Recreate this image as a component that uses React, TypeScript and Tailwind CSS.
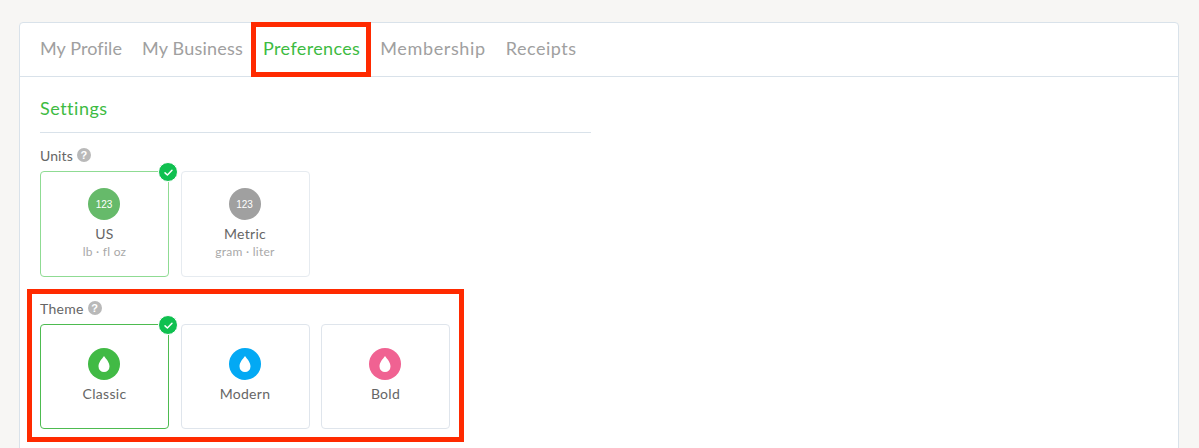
import type { ReactNode } from "react";

const tabs = [
  { label: "My Profile", spacing: "tracking-[0.08px]" },
  { label: "My Business", spacing: "tracking-[0.22px]" },
  { label: "Preferences", spacing: "tracking-[0.36px]" },
  { label: "Membership", spacing: "tracking-[0.64px]" },
  { label: "Receipts", spacing: "tracking-[0.5px]" },
];

function HelpDot() {
  return (
    <span className="flex h-[14px] w-[14px] items-center justify-center rounded-full bg-[#b9b9b9] font-['Liberation_Sans',sans-serif] text-[11px] font-bold leading-none text-white">
      ?
    </span>
  );
}

function CheckBadge() {
  return (
    <span className="absolute -right-[10px] -top-[10px] flex h-[20px] w-[20px] items-center justify-center rounded-full border border-white bg-[#10c050]">
      <svg viewBox="0 0 12 12" className="h-[11px] w-[11px]" fill="none" stroke="white" strokeWidth="1.6" strokeLinecap="round" strokeLinejoin="round">
        <path d="M2.2 6.4 4.8 8.8 9.8 3.6" />
      </svg>
    </span>
  );
}

function Drop() {
  return (
    <svg viewBox="0 0 32 32" className="h-8 w-8" fill="white">
      <path d="M16 8c2.3 3.2 5.5 6.2 5.5 10.5a5.5 5.5 0 0 1-11 0c0-4.3 3.2-7.3 5.5-10.5z" />
    </svg>
  );
}

function Digits() {
  return <span className="font-['Liberation_Sans',sans-serif] text-[10px] text-white">123</span>;
}

function Tile({
  circle,
  title,
  sub,
  selected,
  className,
  children,
}: {
  circle: string;
  title: string;
  sub?: string;
  selected?: boolean;
  className: string;
  children: ReactNode;
}) {
  return (
    <div className={`relative flex w-[129px] flex-col items-center rounded-[4px] border ${className}`}>
      {selected && <CheckBadge />}
      <div className={`mr-px flex h-8 w-8 items-center justify-center rounded-full ${circle}`}>{children}</div>
      <div className="mt-[4px] text-[14px] leading-[20px] tracking-[0.3px] text-[#666666]">{title}</div>
      {sub && <div className="text-[12px] leading-[16px] tracking-[0.25px] text-[#a9a9a9]">{sub}</div>}
    </div>
  );
}

function Label({ text, className }: { text: string; className: string }) {
  return (
    <div className={`flex h-[20px] items-center gap-[4px] pb-[2px] text-[14px] text-[#666666] ${className}`}>
      {text}
      <HelpDot />
    </div>
  );
}

export default function App() {
  return (
    <div className="relative h-[448px] overflow-hidden bg-[#f7f6f4] pl-[19px] pr-[20px] pt-[22px] font-['Lato','Noto_Sans',sans-serif]">
      <div className="h-[500px] rounded-[4px] border border-[#d9e2ea] bg-white">
        <div className="flex h-[54px] items-center gap-[20px] border-b border-[#d9e2ea] pb-[2px] pl-[20px] text-[18px]">
          {tabs.map((t) => (
            <span key={t.label} className={`${t.spacing} ${t.label === "Preferences" ? "text-[#3dbb42]" : "text-[#a0a0a0]"}`}>
              {t.label}
            </span>
          ))}
        </div>

        <div className="pl-[20px]">
          <div className="w-[551px] border-b border-[#d9e2ea] pb-[10px] pt-[18px] text-[18px] leading-[27px] tracking-[0.5px] text-[#3dbb42]">
            Settings
          </div>

          <div className="mt-[13px]">
            <Label text="Units" className="tracking-[0.1px]" />
            <div className="mt-[5px] flex gap-[11.5px]">
              <Tile circle="bg-[#66ba6a]" title="US" sub="lb · fl oz" selected className="h-[106px] border-[#8fdb93] pt-4">
                <Digits />
              </Tile>
              <Tile circle="bg-[#a0a0a0]" title="Metric" sub="gram · liter" className="h-[106px] border-[#e6ebf0] pt-4">
                <Digits />
              </Tile>
            </div>
          </div>

          <div className="mt-[22px]">
            <Label text="Theme" className="tracking-[0.3px]" />
            <div className="mt-[5px] flex gap-[11.5px]">
              <Tile circle="bg-[#41ba45]" title="Classic" selected className="h-[105px] border-[#4dbb50] pt-[23px]">
                <Drop />
              </Tile>
              <Tile circle="bg-[#03a9f4]" title="Modern" className="h-[105px] border-[#dfe5ec] pt-[23px]">
                <Drop />
              </Tile>
              <Tile circle="bg-[#f06292]" title="Bold" className="h-[105px] border-[#dfe5ec] pt-[23px]">
                <Drop />
              </Tile>
            </div>
          </div>
        </div>
      </div>

      {/* red annotation boxes */}
      <div className="absolute left-[251px] top-[22px] h-[55px] w-[120px] border-[5px] border-[#ff2a00]" />
      <div className="absolute left-[27px] top-[289px] h-[153px] w-[437px] border-[5px] border-[#ff2a00]" />
    </div>
  );
}
